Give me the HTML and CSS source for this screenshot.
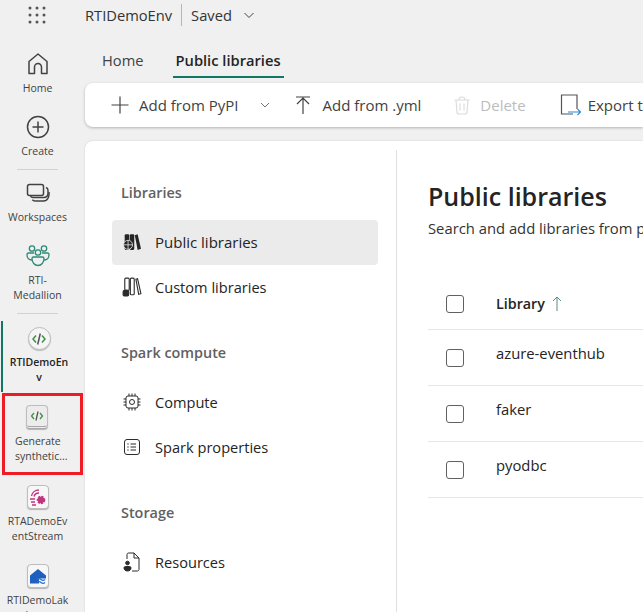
FILE: index.html
```html
<!DOCTYPE html>
<html lang="en">

<head>
  <meta charset="UTF-8">
  <meta name="viewport" content="width=device-width, initial-scale=1.0">
  <title>RTIDemoEnv - Public libraries</title>
  <link rel="stylesheet" href="styles.css">
</head>

<body>
  <div class="app">
    <!-- Left rail -->
    <nav class="rail">
      <div class="waffle">
        <svg width="24" height="24" viewBox="0 0 24 24" fill="#555">
          <circle cx="5" cy="5" r="1.5"/><circle cx="12" cy="5" r="1.5"/><circle cx="19" cy="5" r="1.5"/>
          <circle cx="5" cy="12" r="1.5"/><circle cx="12" cy="12" r="1.5"/><circle cx="19" cy="12" r="1.5"/>
          <circle cx="5" cy="19" r="1.5"/><circle cx="12" cy="19" r="1.5"/><circle cx="19" cy="19" r="1.5"/>
        </svg>
      </div>

      <a class="rail-item">
        <svg class="rail-icon" viewBox="0 0 24 24" fill="none" stroke="#424242" stroke-width="1.5" stroke-linejoin="round">
          <path d="M3 21.500V9.500L12 2l9 7.500v12h-5.500v-6.500a3.500 3.500 0 0 0-7 0v6.500z"/>
        </svg>
        <span>Home</span>
      </a>
      <a class="rail-item">
        <svg class="rail-icon" viewBox="0 0 24 24" fill="none" stroke="#424242" stroke-width="1.5">
          <circle cx="12" cy="12" r="10.500"/><path d="M12 6.500v11M6.500 12h11"/>
        </svg>
        <span>Create</span>
      </a>
      <div class="rail-divider"></div>
      <a class="rail-item">
        <svg class="rail-icon" viewBox="0 0 24 24" fill="none" stroke="#424242" stroke-width="1.5">
          <rect x="1.500" y="3.500" width="16" height="11" rx="2"/>
          <path d="M20 6.500c1.500.5 2 1.500 2 3v2.500c0 3-1.500 4.500-4.500 4.500H7c-1 0-2-.5-2.500-1.500"/>
          <path d="M23 11c.5 5-1.500 9-5.500 9H9c-1.200 0-2-.4-2.700-1.200"/>
        </svg>
        <span>Workspaces</span>
      </a>
      <a class="rail-item">
        <svg class="rail-icon" viewBox="0 0 24 24" fill="none" stroke="#2b8a78" stroke-width="1.300">
          <circle cx="6" cy="4.500" r="2.700"/><circle cx="18" cy="4.500" r="2.700"/><circle cx="12" cy="8.500" r="2.700"/>
          <path d="M8 9H2.500C1.500 9 1 9.800 1 10.500 1 14 3 16 6 16M16 9h5.500c1 0 1.500.8 1.500 1.500 0 3.500-2 5.500-5 5.500"/>
          <path d="M7.500 13h9c1 0 1.500.7 1.500 1.500 0 4-2.500 7-6 7s-6-3-6-7c0-.8.500-1.500 1.500-1.500z"/>
        </svg>
        <span>RTI-<br>Medallion</span>
      </a>
      <div class="rail-divider"></div>

      <a class="rail-item rail-item-active">
        <span class="code-badge">
          <svg width="14" height="14" viewBox="0 0 14 14" fill="none" stroke="#3f9142" stroke-width="1.500">
            <path d="M4 3.500 1 7l3 3.500M10 3.500 13 7l-3 3.500"/><path d="M8.300 1.500 5.700 12.500" stroke="#555"/>
          </svg>
        </span>
        <span>RTIDemoEn<br>v</span>
      </a>

      <a class="rail-item rail-item-marked">
        <span class="item-tile tile-book">
          <svg width="14" height="14" viewBox="0 0 14 14" fill="none" stroke="#3f9142" stroke-width="1.300">
            <path d="M4 4 1.500 7 4 10M10 4l2.500 3L10 10"/><path d="M8 2.500 6 11.500" stroke="#555"/>
          </svg>
        </span>
        <span class="marked-label">Generate<br>synthetic...</span>
      </a>

      <a class="rail-item">
        <span class="item-tile">
          <svg width="20" height="20" viewBox="0 0 20 20" fill="none" stroke="#c2347f" stroke-width="1.400">
            <path d="M3.500 9C4 5.500 7 3 11 3M6 9.500C6.500 7.500 8.500 6 11 6"/><path d="M2 12h5M3 15h4M4 18h4"/>
            <circle cx="13" cy="13" r="3.200" fill="#c2347f" stroke-width="2.200" stroke-dasharray="2 1"/>
          </svg>
        </span>
        <span>RTADemoEv<br>entStream</span>
      </a>

      <a class="rail-item rail-item-last">
        <span class="item-tile">
          <svg width="20" height="20" viewBox="0 0 20 20">
            <path d="M2 17.500V9.500L10 3l8 6.500v3H11v5z" fill="#1f5fbf"/>
            <path d="M9 13.500c1.500-1.200 2.500-1.200 4 0s2.500 1.200 4 0M9 16.500c1.500-1.200 2.500-1.200 4 0s2.500 1.200 4 0" fill="none" stroke="#2a6fce" stroke-width="1.200"/>
          </svg>
        </span>
        <span>RTIDemoLak<br>ehouse</span>
      </a>
    </nav>

    <div class="content">
      <!-- Title bar -->
      <header class="titlebar">
        <span>RTIDemoEnv</span>
        <span class="titlebar-sep"></span>
        <span>Saved</span>
        <svg class="chevron-title" width="12" height="12" viewBox="0 0 12 12" fill="none" stroke="#424242">
          <path d="M1.500 4 6 8.500 10.500 4"/>
        </svg>
      </header>

      <div class="tabs">
        <a class="tab">Home</a>
        <a class="tab tab-active">Public libraries</a>
      </div>

      <!-- Toolbar -->
      <div class="toolbar">
        <a class="tool">
          <svg width="20" height="20" viewBox="0 0 20 20" fill="none" stroke="#424242" stroke-width="1.200"><path d="M10 1.500v17M1.500 10h17"/></svg>
          <span>Add from PyPI</span>
        </a>
        <svg class="chevron-tool" width="10" height="10" viewBox="0 0 10 10" fill="none" stroke="#757575"><path d="M1 3l4 4 4-4"/></svg>
        <a class="tool">
          <svg width="20" height="20" viewBox="0 0 20 20" fill="none" stroke="#424242" stroke-width="1.200"><path d="M3 2h14M10 19V3M4 9l6-6 6 6"/></svg>
          <span>Add from .yml</span>
        </a>
        <a class="tool tool-disabled">
          <svg width="18" height="20" viewBox="0 0 18 20" fill="none" stroke="#dcdcdc" stroke-width="1.200"><path d="M1.500 5h15M6 5c0-2 1-3 3-3s3 1 3 3M3 5l1 12c0 1 1 2 2 2h6c1 0 2-1 2-2l1-12M7 8.500v7M11 8.500v7"/></svg>
          <span>Delete</span>
        </a>
        <a class="tool tool-export">
          <svg width="22" height="22" viewBox="0 0 22 22" fill="none">
            <path d="M17 15V1H1.500v19H13" stroke="#555" stroke-width="1.200"/>
            <path d="M8 18h12.500M17.500 15l3 3-3 3" stroke="#2b88d8" stroke-width="1.100"/>
          </svg>
          <span>Export to .yml</span>
        </a>
      </div>

      <!-- Main card -->
      <main class="card">
        <aside class="side">
          <h3 class="side-heading">Libraries</h3>
          <a class="side-link side-link-active">
            <svg width="18" height="18" viewBox="0 0 16 16" fill="#242424">
              <rect x="1.500" y="1" width="4" height="14" rx="1"/><rect x="6" y="1" width="4" height="14" rx="1"/>
              <path d="M10.500 2 13 1 16 14l-3 1z"/>
              <circle cx="4.500" cy="10.500" r="4" stroke="#ebebeb" stroke-width=".7"/>
              <path d="M.5 10.500h8M4.500 6.500v8" stroke="#ebebeb" stroke-width=".7"/>
            </svg>
            <span>Public libraries</span>
          </a>
          <a class="side-link">
            <svg class="icon-custom" width="20" height="20" viewBox="0 0 18 18" fill="none" stroke="#2b2b2b">
              <rect x="2.500" y="1" width="4" height="11" rx="1"/><rect x="7.500" y="1" width="3.500" height="15" rx="1"/>
              <path d="M12.500 2 14 1.500 17 15l-2 .5z"/>
              <path d="M1 13.500c0-1 .7-1.500 1.500-1.500h2c.8 0 1.500.5 1.500 1.500V16c0 .6-.5 1-1 1H2c-.5 0-1-.4-1-1z" fill="#2b2b2b"/>
            </svg>
            <span>Custom libraries</span>
          </a>

          <h3 class="side-heading side-heading-gap">Spark compute</h3>
          <a class="side-link">
            <svg width="18" height="18" viewBox="0 0 18 18" fill="none" stroke="#2b2b2b">
              <rect x="3" y="3" width="12" height="12" rx="2"/><circle cx="9" cy="9" r="2.500"/>
              <path d="M6 .5V3M9 .5V3M12 .5V3M6 15v2.500M9 15v2.500M12 15v2.500M.5 6H3M.5 9H3M.5 12H3M15 6h2.500M15 9h2.500M15 12h2.500"/>
            </svg>
            <span>Compute</span>
          </a>
          <a class="side-link">
            <svg width="18" height="18" viewBox="0 0 18 18" fill="none" stroke="#2b2b2b">
              <rect x="1.500" y="1.500" width="15" height="15" rx="2.500"/>
              <path d="M7.500 6H13M7.500 9H13M7.500 12H13"/>
              <path d="M5 5.500v1M5 8.500v1M5 11.500v1" stroke-width="1.400"/>
            </svg>
            <span>Spark properties</span>
          </a>

          <h3 class="side-heading side-heading-gap">Storage</h3>
          <a class="side-link">
            <svg width="18" height="20" viewBox="0 0 18 20" fill="none" stroke="#2b2b2b">
              <path d="M4 7V2.500C4 1.700 4.700 1 5.500 1h5.500l5 5v11.500c0 .8-.7 1.500-1.500 1.500H9"/><path d="M11 1v5h5"/>
              <circle cx="4.500" cy="11" r="1.800" fill="#2b2b2b"/>
              <path d="M1 16c0-1 .7-1.500 1.500-1.500h4C7.300 14.500 8 15 8 16c0 1.800-1.500 3-3.500 3S1 17.800 1 16z" fill="#2b2b2b"/>
            </svg>
            <span>Resources</span>
          </a>
        </aside>

        <section class="panel">
          <h1 class="panel-title">Public libraries</h1>
          <p class="panel-sub">Search and add libraries from public repositories</p>

          <div class="lib-table">
            <div class="lib-row lib-head">
              <span class="check"></span>
              <span class="lib-name">Library</span>
              <svg class="sort-arrow" width="10" height="15" viewBox="0 0 10 15" fill="none" stroke="#5f8a83"><path d="M5 15V1M1 5l4-4 4 4"/></svg>
            </div>
            <div class="lib-row">
              <span class="check"></span>
              <span class="lib-name">azure-eventhub</span>
            </div>
            <div class="lib-row">
              <span class="check"></span>
              <span class="lib-name">faker</span>
            </div>
            <div class="lib-row">
              <span class="check"></span>
              <span class="lib-name">pyodbc</span>
            </div>
          </div>
        </section>
      </main>
    </div>
  </div>
</body>

</html>
```

FILE: styles.css
```css
* {
  box-sizing: border-box;
}

html,
body {
  margin: 0;
  padding: 0;
  height: 612px;
  overflow: hidden;
}

body {
  font-family: "Open Sans", "Noto Sans", sans-serif;
  background-color: #f0f0f0;
  color: #242424;
}

svg {
  flex: none;
}

.app {
  display: flex;
  height: 612px;
}

/* left rail */
.rail {
  flex: 0 0 85px;
  display: flex;
  flex-direction: column;
  font-size: 10.5px;
  line-height: 15px;
  color: #424242;
  text-align: center;
}

.waffle {
  flex: none;
  height: 42px;
  padding: 3px 0 0 25px;
  display: flex;
}

.rail-item {
  flex: none;
  width: 75px;
  display: flex;
  flex-direction: column;
  align-items: center;
  gap: 5px;
  padding: 10px 0 9px;
}

.rail-icon {
  width: 24px;
  height: 24px;
}

.rail-divider {
  flex: none;
  width: 41px;
  height: 1px;
  margin: 1px 0 1px 17px;
  background-color: #d1d1d1;
}

.rail-item-active {
  margin: 6px 0 1px 1px;
  height: 71px;
  width: 74px;
  padding: 6px 0 0;
  border-left: 2px solid #117865;
  font-weight: 600;
  color: #242424;
}

.rail-item-marked {
  margin-left: 2px;
  width: 81px;
  height: 82px;
  padding: 9px 0 0 10px;
  align-items: flex-start;
  border: 3px solid #ee1c25;
}

.rail-item-marked .item-tile {
  margin-left: 11px;
}

.marked-label {
  text-align: left;
}

.rail-item-last {
  margin-top: 1px;
}

.code-badge {
  width: 23px;
  height: 23px;
  border-radius: 50%;
  display: flex;
  align-items: center;
  justify-content: center;
  background-color: #f5f5f5;
  border: 1px solid #bdbdbd;
  box-shadow: 0 1px 1px rgba(0, 0, 0, 0.2);
}

.item-tile {
  width: 22px;
  height: 24px;
  border-radius: 4px;
  display: flex;
  align-items: center;
  justify-content: center;
  background-color: #f7f7f7;
  border: 1px solid #bdbdbd;
  box-shadow: 0 1px 1px rgba(0, 0, 0, 0.25);
}

.tile-book {
  border-bottom: 3px double #a8a8a8;
  background-color: #ececec;
}

/* top */
.content {
  flex: 1;
  min-width: 0;
  display: flex;
  flex-direction: column;
}

.titlebar {
  flex: none;
  height: 30px;
  display: flex;
  align-items: center;
  gap: 9px;
  font-size: 14.7px;
  color: #333;
  white-space: nowrap;
}

.titlebar-sep {
  width: 1px;
  height: 22px;
  background-color: #b5b5b5;
}

.chevron-title {
  margin-left: 2px;
}

.tabs {
  flex: none;
  height: 48px;
  padding: 19px 0 0 17px;
  display: flex;
  gap: 32px;
  align-items: flex-start;
  font-size: 14.7px;
  color: #424242;
}

.tab {
  line-height: 22px;
}

.tab-active {
  height: 29px;
  font-weight: 600;
  color: #242424;
  border-bottom: 2px solid #117865;
  margin: 0 -3px;
  padding: 0 3px;
}

.toolbar {
  flex: none;
  height: 44px;
  margin-top: 5px;
  display: flex;
  align-items: center;
  padding-left: 25px;
  background-color: #fff;
  border-radius: 8px 0 0 8px;
  box-shadow: 0 1px 3px rgba(0, 0, 0, 0.25);
  font-size: 15px;
  color: #424242;
  white-space: nowrap;
  overflow: hidden;
}

.tool {
  flex: none;
  display: flex;
  align-items: center;
  gap: 9px;
  margin-right: 32px;
}

.tool-disabled {
  color: #bdbdbd;
}

.tool-export {
  gap: 6px;
  margin-left: 2px;
}

.chevron-tool {
  margin: 0 23px 0 -10px;
}

/* main card */
.card {
  flex: 1;
  margin-top: 14px;
  padding-top: 9px;
  display: flex;
  background-color: #fff;
  border-radius: 8px 0 0 0;
  box-shadow: 0 0 2px rgba(0, 0, 0, 0.15);
  min-height: 0;
}

.side {
  flex: 0 0 312px;
  border-right: 1px solid #e0e0e0;
  padding: 33px 18px 0 27px;
}

.side-heading {
  margin: 0 0 17px 9px;
  font-size: 14.4px;
  line-height: 20px;
  font-weight: 600;
  color: #616161;
}

.side-heading-gap {
  margin-top: 33px;
}

.side-link {
  height: 45px;
  display: flex;
  align-items: center;
  gap: 14px;
  padding: 0 0 2px 11px;
  font-size: 14.6px;
  color: #242424;
  border-radius: 4px;
}

.icon-custom {
  margin: 0 -1px;
}

.side-link-active {
  background-color: #ebebeb;
  font-size: 15px;
}

.panel {
  flex: 1;
  min-width: 0;
  padding: 29px 0 0 31px;
  white-space: nowrap;
  overflow: hidden;
}

.panel-title {
  margin: 0;
  font-size: 25px;
  line-height: 34px;
  font-weight: 600;
}

.panel-sub {
  margin: 5px 0 0;
  font-size: 14.8px;
  line-height: 20px;
  color: #333;
}

.lib-table {
  margin-top: 44px;
  font-size: 14.8px;
}

.lib-row {
  height: 56px;
  display: flex;
  align-items: center;
  padding-left: 18px;
  border-bottom: 1px solid #e6e6e6;
}

.lib-head {
  height: 48px;
  padding-bottom: 4px;
  font-size: 14.3px;
  font-weight: 600;
}

.check {
  flex: none;
  width: 18px;
  height: 18px;
  margin-right: 32px;
  border: 1px solid #616161;
  border-radius: 3px;
}

.lib-name {
  padding-bottom: 9px;
}

.lib-head .lib-name {
  padding-bottom: 0;
}

.sort-arrow {
  margin-left: 7px;
}
```
